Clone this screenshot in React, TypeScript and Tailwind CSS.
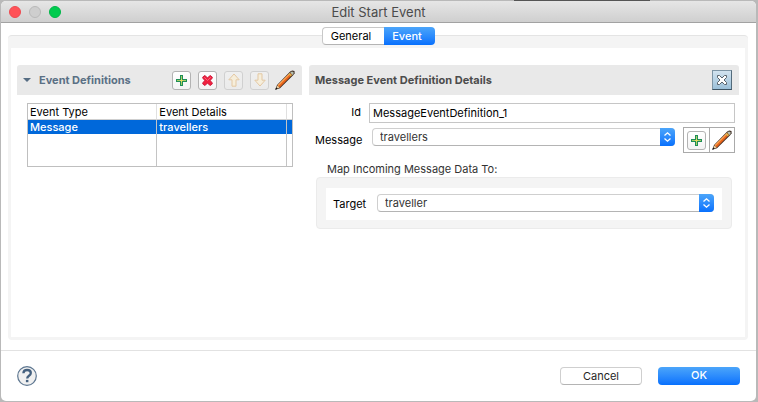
import type { ReactNode } from "react";

function PlusIcon() {
  return (
    <svg width="11" height="11" viewBox="0 0 11 11" shapeRendering="crispEdges" aria-hidden="true">
      <path d="M4 0h3v4h4v3H7v4H4V7H0V4h4z" fill="#1f8f56" />
      <path d="M5 1h1v4h4v1H6v4H5V6H1V5h4z" fill="#a9cc66" />
      <path d="M5 4h1v1h1v1H6v1H5V6H4V5h1z" fill="#e6dc62" />
    </svg>
  );
}

function DeleteIcon() {
  return (
    <svg width="11" height="11" viewBox="0 0 12 12" aria-hidden="true">
      <path
        d="M.8 2.4 2.4.8h1.2L6 3.300 8.400.8h1.200l1.600 1.600v1.200L8.700 6l2.500 2.400v1.200l-1.600 1.600H8.400L6 8.700l-2.400 2.500H2.400L.8 9.600V8.400L3.300 6 .8 3.600z"
        fill="#f0213f"
        stroke="#cc1738"
      />
      <path d="m2.5 2.500 3.500 3.500 3.500-3.500" stroke="#fa6a80" strokeWidth="1" fill="none" />
    </svg>
  );
}

function ArrowIcon({ down = false }: { down?: boolean }) {
  return (
    <svg width="12" height="14" viewBox="0 0 12 14" aria-hidden="true">
      <path
        d={down ? "M4 .8h4v6.400h3.200L6 13 .8 7.200H4z" : "M6 1l5.200 5.800H8v6.400H4V6.800H.8z"}
        fill="#f6eedb"
        stroke="#e3c8a3"
        strokeLinejoin="round"
      />
    </svg>
  );
}

function PencilIcon() {
  return (
    <svg width="20" height="20" viewBox="0 0 20 20" aria-hidden="true">
      <path d="M.3 19.7 2 15 15.2 1.6 17.2.4l2.3.7.1 2.2-1.2 1.8L5 18.2z" fill="#3c2a20" />
      <path d="M2.6 15.6 15.2 2.9l2 1.9L4.7 17.4z" fill="#e8641b" />
      <path d="m3 15.5 12-12" stroke="#ffa957" strokeWidth="1.1" />
      <path d="m15.2 2.6 1.6-1.2 1.8.6-.1 1.9-1.2 1.1z" fill="#b5bfae" />
      <path d="m14.1 3.8 2.2 2" stroke="#d1c655" strokeWidth="1.2" />
      <path d="m1.4 17.7 1-2.3 2.3 2.1-2.2 1z" fill="#edcf9f" />
      <path d="m.3 19.7.8-2.4 1.6 1.5z" fill="#111" />
    </svg>
  );
}

function ToolButton({ label, disabled, children }: { label: string; disabled?: boolean; children: ReactNode }) {
  return (
    <button
      aria-label={label}
      disabled={disabled}
      className="flex size-[19px] items-center justify-center rounded-[3px] border border-[#b3b3b3] bg-gradient-to-b from-white to-[#f4f4f4] disabled:border-[#d0d0d0] disabled:from-[#efefef] disabled:to-[#ebebeb]"
    >
      {children}
    </button>
  );
}

function Dropdown({ id, value }: { id: string; value: string }) {
  return (
    <div className="relative min-w-0 flex-1">
      <select
        id={id}
        className="block h-[18px] w-full appearance-none rounded-[4px] border border-[#cfcfcf] border-b-[#b4b4b4] bg-white pl-[7px] text-[11px] leading-4 text-[#333]"
      >
        <option>{value}</option>
      </select>
      <span className="pointer-events-none absolute inset-y-0 right-0 flex w-[15px] items-center justify-center rounded-r-[4px] bg-gradient-to-b from-[#4ba5fa] to-[#0670fd]">
        <svg width="9" height="12" viewBox="0 0 9 12" fill="none" stroke="white" strokeWidth="1.3" aria-hidden="true">
          <path d="m1.500 4.500 3-2.700 3 2.700M1.500 7.500l3 2.700 3-2.700" />
        </svg>
      </span>
    </div>
  );
}

function TitleBar() {
  return (
    <header className="grid h-[22px] grid-cols-[1fr_auto_1fr] items-center rounded-t-[5px] border-b border-[#a2a2a2] bg-gradient-to-b from-[#e6e6e6] to-[#cfcfcf]">
      <div className="flex gap-2 pl-2">
        <button aria-label="Close" className="size-3 rounded-full border border-[#ee4a50] bg-[#ff5257]" />
        <button aria-label="Minimize" disabled className="size-3 rounded-full border border-[#b9b9b9] bg-[#cecece]" />
        <button aria-label="Zoom" className="size-3 rounded-full border border-[#00b648] bg-[#00cb4e]" />
      </div>
      <h1 className="text-[13px] leading-5 text-[#4b4b4b]">Edit Start Event</h1>
    </header>
  );
}

function EventDefinitions() {
  return (
    <section className="min-w-0">
      <div className="flex h-[30px] items-center rounded-t-[3px] bg-[#e9e9e9] pr-[7px] pl-[6px]">
        <button className="flex items-center gap-2 text-[11px] font-bold text-[#5a7085]">
          <svg width="8" height="4" viewBox="0 0 8 4" aria-hidden="true">
            <path d="M0 0h8L4 4z" fill="#566d83" />
          </svg>
          Event Definitions
        </button>
        <div className="ml-auto flex items-center gap-[7px]">
          <ToolButton label="Add"><PlusIcon /></ToolButton>
          <ToolButton label="Remove"><DeleteIcon /></ToolButton>
          <ToolButton label="Move up" disabled><ArrowIcon /></ToolButton>
          <ToolButton label="Move down" disabled><ArrowIcon down /></ToolButton>
          <button aria-label="Edit" className="-ml-px"><PencilIcon /></button>
        </div>
      </div>
      <div className="mt-2 mr-[9px] ml-[10px] border border-[#bfbfbf]">
        <table className="w-full table-fixed border-separate border-spacing-0 text-left text-[11px] leading-[14px]">
          <colgroup>
            <col className="w-[49%]" />
            <col />
            <col className="w-[5px]" />
          </colgroup>
          <thead>
            <tr className="h-4">
              <th className="border-r border-b border-r-[#e0e0e0] border-b-[#cfcfcf] px-[2px] font-normal">Event Type</th>
              <th className="border-r border-b border-r-[#e0e0e0] border-b-[#cfcfcf] px-[2px] font-normal">Event Details</th>
              <td className="border-b border-[#cfcfcf]" />
            </tr>
          </thead>
          <tbody>
            <tr className="h-[14px] bg-[#0068da] font-medium text-white">
              <td className="border-r border-[#c4c4c4] px-[2px]">Message</td>
              <td className="border-r border-[#c4c4c4] px-[2px]">travellers</td>
              <td />
            </tr>
            <tr className="h-8">
              <td className="border-r border-[#c4c4c4]" />
              <td className="border-r border-[#c4c4c4]" />
              <td />
            </tr>
          </tbody>
        </table>
      </div>
    </section>
  );
}

function MessageDetails() {
  return (
    <section className="min-w-0">
      <div className="flex h-[30px] items-center justify-between rounded-t-[3px] bg-[#e9e9e9] pr-[7px] pl-[6px]">
        <h2 className="text-[11px] font-bold text-[#4c4c4c]">Message Event Definition Details</h2>
        <button
          aria-label="Close details"
          className="flex size-5 items-center justify-center border border-t-[#7d95a5] border-r-[#536b7b] border-b-[#3e5362] border-l-[#7d95a5] bg-gradient-to-b from-[#d2e3ef] to-[#9bc0d9]"
        >
          <svg width="12" height="12" viewBox="0 0 12 12" aria-hidden="true">
            <path
              d="M1.5 1.5h2L6 4l2.500-2.500h2v2L8 6l2.500 2.500v2h-2L6 8l-2.500 2.500h-2v-2L4 6 1.500 3.500z"
              fill="white"
              stroke="#59636b"
            />
          </svg>
        </button>
      </div>
      <div className="mt-2 flex pr-[4px]">
        <label htmlFor="event-id" className="w-[60px] pr-2 text-right leading-[18px]">Id</label>
        <input
          id="event-id"
          defaultValue="MessageEventDefinition_1"
          className="h-5 min-w-0 flex-1 border border-[#c6c6c6] bg-white px-[3px] text-[11px]"
        />
      </div>
      <div className="mt-1 flex items-start pr-[4px]">
        <label htmlFor="message" className="mt-1 w-[63px] pl-[6px] leading-[18px]">Message</label>
        <div className="mt-px flex min-w-0 flex-1"><Dropdown id="message" value="travellers" /></div>
        <div className="ml-2 flex divide-x divide-[#aaa] border border-[#aaa]">
          <div className="flex h-6 w-[26px] items-center justify-center"><ToolButton label="Add message"><PlusIcon /></ToolButton></div>
          <button aria-label="Edit message" className="flex h-6 w-6 items-center justify-center"><PencilIcon /></button>
        </div>
      </div>
      <fieldset className="mx-[7px] mt-2">
        <legend className="pl-[11px] leading-4 text-[#333]">Map Incoming Message Data To:</legend>
        <div className="rounded-[4px] border border-[#ebebeb] bg-[#f4f4f4] px-[9px] pt-[10px] pb-2">
          <div className="flex items-start bg-white py-[6px] pr-2 pl-[7px]">
            <label htmlFor="target" className="w-[44px] leading-5">Target</label>
            <Dropdown id="target" value="traveller" />
          </div>
        </div>
      </fieldset>
    </section>
  );
}

export default function App() {
  return (
    <div className="flex min-h-screen flex-col bg-[#b9b9b9] pr-[2px] pb-px pl-px font-[Inter,'Liberation_Sans',sans-serif] text-[11px] text-black">
      <div className="flex h-px">
        <span className="w-[68%]" />
        <span className="w-[18%] bg-[#555]" />
      </div>
      <div className="flex flex-1 flex-col rounded-[5px] bg-white">
        <TitleBar />
        <main className="flex flex-1 flex-col pt-1 pr-2 pb-[10px] pl-[7px]">
          <div role="tablist" className="z-10 flex h-[18px] self-center rounded-[4px] bg-white">
            <button role="tab" aria-selected="false" className="w-[62px] rounded-l-[4px] border border-r-0 border-[#c8c8c8] border-b-[#b4b4b4] pr-1">General</button>
            <button role="tab" aria-selected="true" className="w-[51px] rounded-r-[4px] bg-gradient-to-b from-[#4ba5fa] to-[#0670fd] pr-1 font-medium text-white">Event</button>
          </div>
          <div role="tabpanel" className="-mt-[10px] flex flex-1 rounded-[4px] border-t border-[#e4e4e4] bg-[#f4f4f4] px-[3px] pt-3 pb-[3px]">
            <div className="grid min-w-0 flex-1 grid-cols-[285fr_430fr] content-start gap-[7px] bg-white pt-[17px] pr-[6px] pl-[6px]">
              <EventDefinitions />
              <MessageDetails />
            </div>
          </div>
        </main>
        <footer className="flex h-[51px] items-center border-t border-[#e2e2e2] pr-4 pb-px pl-4">
          <button aria-label="Help">
            <svg width="20" height="20" viewBox="0 0 20 20" fill="none" aria-hidden="true">
              <circle cx="10" cy="10" r="9.3" fill="#f0f0f0" stroke="#5d7690" strokeWidth="1.2" />
              <path d="M6.400 7.200C6.500 5 8 4 10.100 4c2.200 0 3.700 1 3.700 3 0 2.900-3.600 2.600-3.600 5.400" stroke="#45617f" strokeWidth="2.300" />
              <path d="M8.900 13.900h2.500v2.300H8.900z" fill="#45617f" />
            </svg>
          </button>
          <div className="ml-auto flex gap-4">
            <button className="h-[18px] w-[82px] rounded-[4px] border border-[#cfcfcf] border-b-[#b4b4b4] bg-white leading-4 text-[#262626]">Cancel</button>
            <button className="h-[18px] w-[82px] rounded-[4px] bg-gradient-to-b from-[#4ba5fa] to-[#0670fd] font-medium text-white">OK</button>
          </div>
        </footer>
      </div>
    </div>
  );
}
